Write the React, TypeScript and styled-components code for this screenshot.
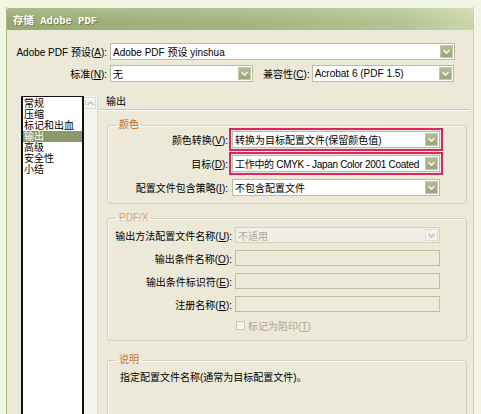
import React from "react";
import styled, { createGlobalStyle } from "styled-components";

const GlobalStyle = createGlobalStyle`
  html, body {
    margin: 0;
    padding: 0;
    background: #f2f5e4;
  }
  body {
    font-family: "Liberation Sans", "Noto Sans CJK SC", sans-serif;
    font-size: 10px;
    color: #000;
    overflow: hidden;
  }
`;

const Page = styled.div`
  width: 481px;
  height: 414px;
  overflow: hidden;
  box-sizing: border-box;
  padding: 7px 0 0 6px;
`;

const Window = styled.div`
  width: 468px;
  height: 420px;
  box-sizing: border-box;
  overflow: hidden;
  background: #ece9d8;
  border-left: 1px solid #aebb8c;
  border-right: 1px solid #c9d2b0;
  display: flex;
  flex-direction: column;
`;

const TitleBar = styled.div`
  height: 23px;
  flex-shrink: 0;
  box-sizing: border-box;
  border-top: 1px solid #f6f8ee;
  border-radius: 3px 3px 0 0;
  background: linear-gradient(
    to bottom,
    rgba(255, 255, 255, 0.18),
    rgba(255, 255, 255, 0) 60%
  ),
    linear-gradient(to right, #98aa72 0%, #a6b683 55%, #b5c494 85%, #cbd7ab 100%);
  display: flex;
  align-items: center;
  padding-left: 6px;
  color: #fff;
  font-family: "Liberation Mono", "Noto Sans CJK SC", monospace;
  font-weight: bold;
  font-size: 10.5px;
  text-shadow: 1px 1px 0 #6f7f4e;
`;

const Body = styled.div`
  flex-shrink: 0;
  padding-top: 13px;
  display: flex;
  flex-direction: column;
`;

const Row = styled.div<{ $gap?: number; $top?: number }>`
  display: flex;
  align-items: center;
  gap: ${(p) => p.$gap ?? 3}px;
  margin-top: ${(p) => p.$top ?? 0}px;
`;

const Label = styled.div<{ $w?: number; $muted?: boolean }>`
  ${(p) => (p.$w ? `width: ${p.$w}px;` : "")}
  flex-shrink: 0;
  text-align: right;
  white-space: nowrap;
  color: ${(p) => (p.$muted ? "#aca899" : "#000")};
`;

const ComboBox = styled.div<{ $w: number; $h?: number; $disabled?: boolean; $mark?: boolean }>`
  width: ${(p) => p.$w}px;
  height: ${(p) => p.$h ?? 17}px;
  box-sizing: border-box;
  flex-shrink: 0;
  display: flex;
  align-items: center;
  background: ${(p) => (p.$disabled ? "#f0efe6" : "#fff")};
  border: 1px solid ${(p) => (p.$disabled ? "#d4d2c4" : "#b9bea2")};
  color: ${(p) => (p.$disabled ? "#aca899" : "#000")};
  outline: ${(p) => (p.$mark ? "2px solid #d8285f" : "none")};
  outline-offset: 1px;
`;

const ComboText = styled.div<{ $tight?: boolean }>`
  flex: 1;
  padding-left: 2px;
  white-space: nowrap;
  overflow: hidden;
  letter-spacing: ${(p) => (p.$tight ? "-0.3px" : "0")};
`;

const DropButton = styled.div<{ $disabled?: boolean }>`
  width: 13px;
  align-self: stretch;
  margin: 1px;
  box-sizing: border-box;
  display: flex;
  align-items: center;
  justify-content: center;
  border: 1px solid ${(p) => (p.$disabled ? "#e2e0d6" : "#c3caa8")};
  background: ${(p) =>
    p.$disabled
      ? "#f3f2ec"
      : "linear-gradient(to bottom, #b3bb95, #9aa57a)"};
`;

const TextField = styled.div<{ $w: number }>`
  width: ${(p) => p.$w}px;
  height: 16px;
  box-sizing: border-box;
  flex-shrink: 0;
  border: 1px solid #bcc29c;
  background: #ece9d8;
`;

const Content = styled.div`
  margin-top: 14px;
  padding-left: 14px;
  display: flex;
  align-items: flex-start;
`;

const ListBox = styled.div`
  width: 63px;
  height: 330px;
  box-sizing: border-box;
  background: #fff;
  border: 2px solid #111;
  border-top-width: 1px;
  padding-top: 1px;
  flex-shrink: 0;
`;

const ListItem = styled.div<{ $selected?: boolean }>`
  height: 11px;
  line-height: 11px;
  padding-left: 1px;
  font-size: 10px;
  white-space: nowrap;
  color: ${(p) => (p.$selected ? "#fff" : "#000")};
  background: ${(p) => (p.$selected ? "#8c986a" : "transparent")};
`;

const ScrollTrack = styled.div`
  width: 14px;
  height: 330px;
  background: #f5f4ee;
  border-right: 1px solid #dcd9ca;
  box-sizing: border-box;
  padding: 1px;
  flex-shrink: 0;
`;

const ScrollButton = styled.div`
  height: 12px;
  box-sizing: border-box;
  border: 1px solid #dedbcf;
  background: #f7f6f1;
  display: flex;
  align-items: center;
  justify-content: center;
`;

const Panel = styled.div`
  width: 370px;
  margin-left: 2px;
  display: flex;
  flex-direction: column;
`;

const PanelTitle = styled.div`
  height: 12px;
  line-height: 12px;
  padding-left: 6px;
`;

const Separator = styled.div`
  height: 0;
  margin-top: 1px;
  border-top: 1px solid #c9c6b4;
  border-bottom: 1px solid #fff;
`;

const Group = styled.fieldset<{ $top: number; $bottom?: number }>`
  margin: ${(p) => p.$top}px 0 0 7px;
  width: 360px;
  box-sizing: border-box;
  border: 1px solid #d2d0bf;
  border-radius: 3px;
  box-shadow: inset 1px 1px 0 #fbfaf5;
  padding: 0 0 ${(p) => p.$bottom ?? 7}px 0;
  display: flex;
  flex-direction: column;
`;

const Legend = styled.legend<{ $tone: string }>`
  margin-left: 8px;
  padding: 0 3px;
  line-height: 12px;
  font-size: 10px;
  color: ${(p) => p.$tone};
`;

const Stack = styled.div<{ $gap: number; $pt?: number }>`
  display: flex;
  flex-direction: column;
  gap: ${(p) => p.$gap}px;
  padding-top: ${(p) => p.$pt ?? 0}px;
`;

const CheckRow = styled.div`
  display: flex;
  align-items: center;
  gap: 3px;
  margin-left: 128px;
  color: #aca899;
  height: 12px;
`;

const CheckBox = styled.div`
  width: 9px;
  height: 9px;
  box-sizing: border-box;
  border: 1px solid #cac8ba;
  background: #f7f6f1;
`;

const Note = styled.div`
  padding: 3px 0 0 12px;
  height: 60px;
`;

const U = styled.span`
  text-decoration: underline;
`;

const Chevron = ({ color, up }: { color: string; up?: boolean }) => (
  <svg width="9" height="7" viewBox="0 0 9 7">
    <path
      d={up ? "M1.5 5 L4.5 2 L7.5 5" : "M1.5 2 L4.5 5 L7.5 2"}
      fill="none"
      stroke={color}
      strokeWidth="1.6"
    />
  </svg>
);

const Combo = ({
  w,
  h,
  text,
  disabled,
  mark,
  tight,
}: {
  w: number;
  h?: number;
  text: string;
  disabled?: boolean;
  mark?: boolean;
  tight?: boolean;
}) => (
  <ComboBox $w={w} $h={h} $disabled={disabled} $mark={mark}>
    <ComboText $tight={tight}>{text}</ComboText>
    <DropButton $disabled={disabled}>
      <Chevron color={disabled ? "#c4c2b5" : "#f4f6ea"} />
    </DropButton>
  </ComboBox>
);

const sections = ["常规", "压缩", "标记和出血", "输出", "高级", "安全性", "小结"];

export default function App() {
  return (
    <>
      <GlobalStyle />
      <Page>
        <Window>
          <TitleBar>存储 Adobe PDF</TitleBar>
          <Body>
            <Row>
              <Label $w={100}>
                Adobe PDF 预设(<U>A</U>):
              </Label>
              <Combo w={345} text="Adobe PDF 预设 yinshua" />
            </Row>
            <Row $top={5}>
              <Label $w={100}>
                标准(<U>N</U>):
              </Label>
              <Combo w={143} text="无" />
              <Row $gap={2} style={{ marginLeft: 7 }}>
                <Label>
                  兼容性(<U>C</U>):
                </Label>
                <Combo w={142} text="Acrobat 6 (PDF 1.5)" />
              </Row>
            </Row>

            <Content>
              <ListBox>
                {sections.map((s) => (
                  <ListItem key={s} $selected={s === "输出"}>
                    {s}
                  </ListItem>
                ))}
              </ListBox>
              <ScrollTrack>
                <ScrollButton>
                  <Chevron color="#c9c7b8" up />
                </ScrollButton>
              </ScrollTrack>
              <Panel>
                <PanelTitle>输出</PanelTitle>
                <Separator />

                <Group $top={8}>
                  <Legend $tone="#c0681f">颜色</Legend>
                  <Stack $gap={7}>
                    <Row $gap={4}>
                      <Label $w={120}>
                        颜色转换(<U>V</U>):
                      </Label>
                      <Combo w={208} text="转换为目标配置文件(保留颜色值)" mark />
                    </Row>
                    <Row $gap={4}>
                      <Label $w={120}>
                        目标(<U>D</U>):
                      </Label>
                      <Combo
                        w={208}
                        text="工作中的 CMYK - Japan Color 2001 Coated"
                        mark
                        tight
                      />
                    </Row>
                    <Row $gap={4}>
                      <Label $w={120}>
                        配置文件包含策略(<U>I</U>):
                      </Label>
                      <Combo w={208} text="不包含配置文件" />
                    </Row>
                  </Stack>
                </Group>

                <Group $top={8} $bottom={9}>
                  <Legend $tone="#d9a46c">PDF/X</Legend>
                  <Stack $gap={7} $pt={3}>
                    <Row>
                      <Label $w={124}>
                        输出方法配置文件名称(<U>U</U>):
                      </Label>
                      <Combo w={205} h={16} text="不适用" disabled />
                    </Row>
                    <Row>
                      <Label $w={124}>
                        输出条件名称(<U>O</U>):
                      </Label>
                      <TextField $w={205} />
                    </Row>
                    <Row>
                      <Label $w={124}>
                        输出条件标识符(<U>E</U>):
                      </Label>
                      <TextField $w={205} />
                    </Row>
                    <Row>
                      <Label $w={124}>
                        注册名称(<U>R</U>):
                      </Label>
                      <TextField $w={205} />
                    </Row>
                    <CheckRow>
                      <CheckBox />
                      <span>
                        标记为陷印(<U>T</U>)
                      </span>
                    </CheckRow>
                  </Stack>
                </Group>

                <Group $top={13}>
                  <Legend $tone="#c3772c">说明</Legend>
                  <Note>指定配置文件名称(通常为目标配置文件)。</Note>
                </Group>
              </Panel>
            </Content>
          </Body>
        </Window>
      </Page>
    </>
  );
}
